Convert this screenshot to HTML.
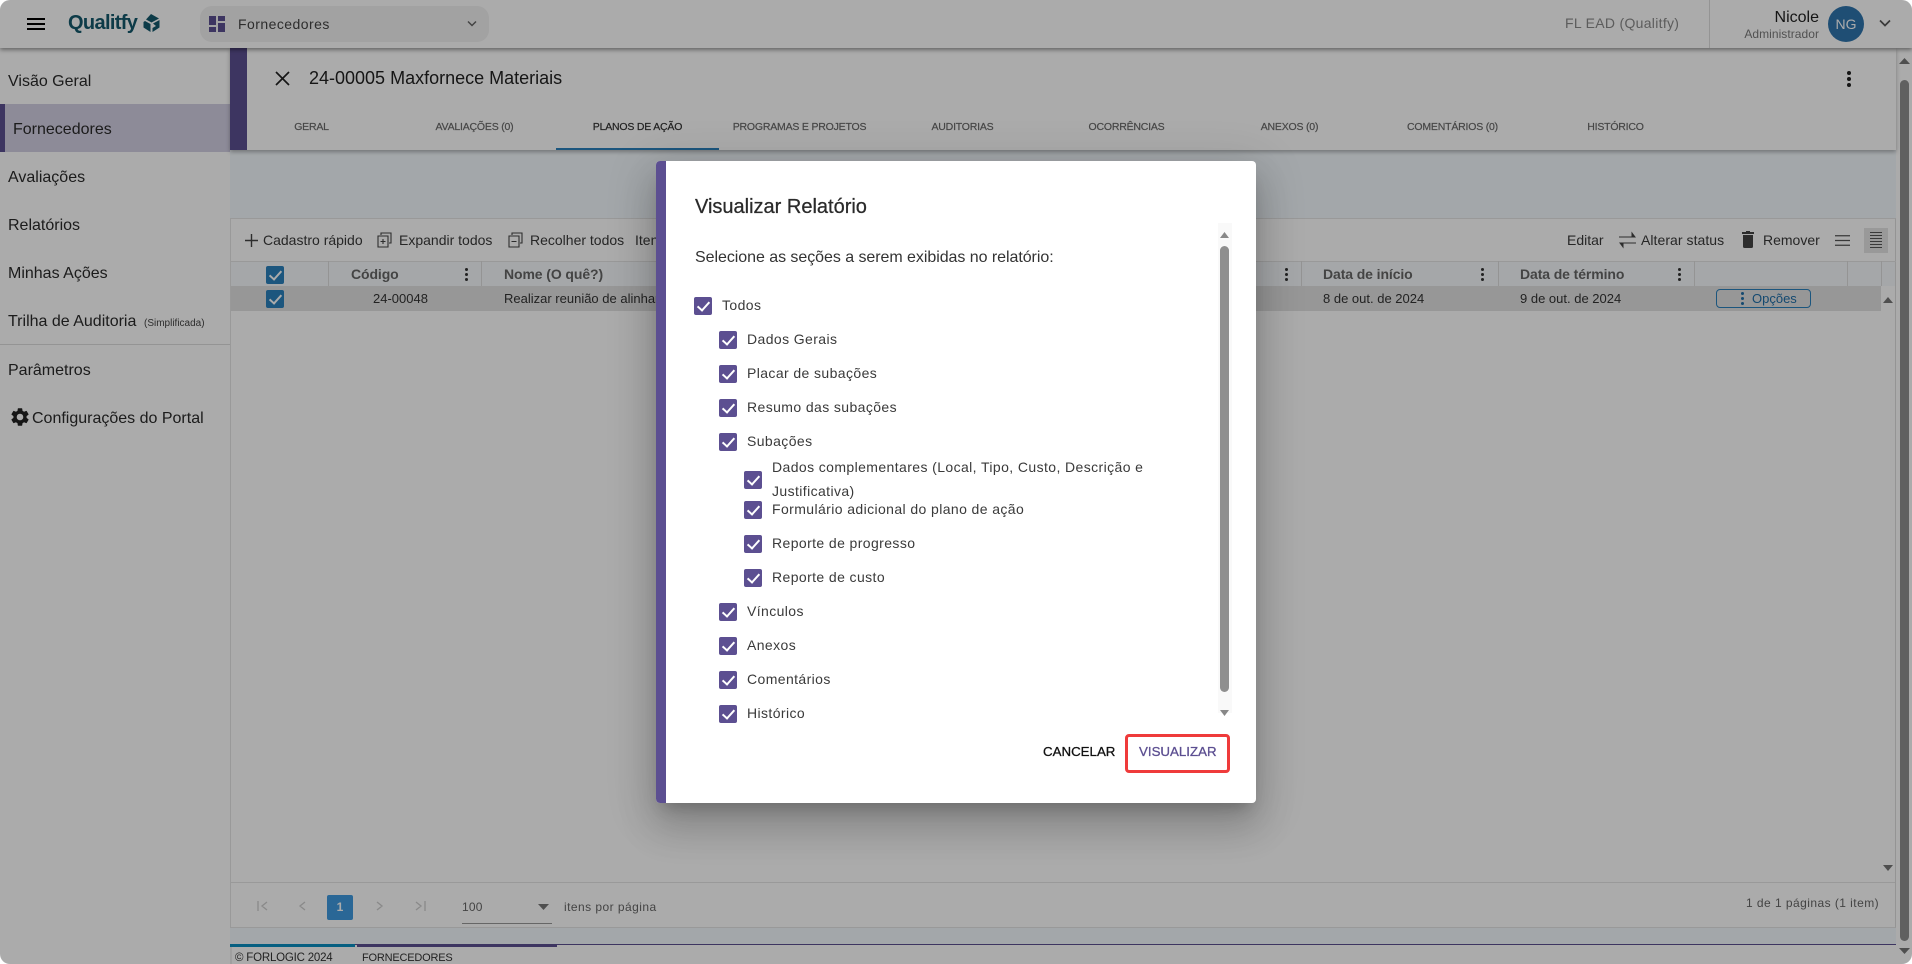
<!DOCTYPE html>
<html lang="pt-BR"><head><meta charset="utf-8"><title>Visualizar Relatório</title>
<style>
html,body{margin:0;padding:0;width:1912px;height:964px;overflow:hidden;background:#fff}
body{font-family:"Liberation Sans",sans-serif;color:#222;position:relative}
#app{position:absolute;left:0;top:0;width:1912px;height:964px;background:#fff;border-radius:10px;overflow:hidden}
.a{position:absolute}
.t{position:absolute;white-space:nowrap;line-height:20px;height:20px}
.nav{font-size:16px;color:#2a2a2a;margin-top:6px}
.tab{font-size:10.5px;letter-spacing:-.2px;color:#6a6a6a;width:163px;text-align:center;top:117px;-webkit-text-stroke:.2px}
.tb{font-size:14px;color:#3a3a3a;top:230px}
.th{font-size:14px;font-weight:bold;color:#666;top:264px;letter-spacing:-.1px}
.td{font-size:13px;color:#333;top:289px}
.vl{position:absolute;top:261px;height:25px;width:1px;background:#ddd}
.keb{position:absolute;width:3px;height:3px;background:#333;border-radius:50%;box-shadow:0 5px 0 #333,0 -5px 0 #333}
.cb{position:absolute;width:18px;height:18px;border-radius:2px;background:#5c4f91}
.cb::after{content:"";position:absolute;left:6px;top:2px;width:5px;height:10px;border:solid #fff;border-width:0 2px 2px 0;transform:rotate(42deg)}
.cb.b{background:#2a80bd}
.l{position:absolute;white-space:nowrap;font-size:14px;line-height:20px;color:#3a3a3a;letter-spacing:.4px}
#ov{position:absolute;left:0;top:0;width:1912px;height:964px;background:rgba(0,0,0,.33);z-index:10;border-radius:10px}
#dlg{position:absolute;left:656px;top:161px;width:600px;height:642px;background:#fff;border-radius:4px;overflow:hidden;z-index:12}
#sh{position:absolute;left:656px;top:161px;width:600px;height:642px;border-radius:4px;z-index:11;box-shadow:0 11px 15px -7px rgba(0,0,0,.2),0 24px 38px 3px rgba(0,0,0,.14),0 9px 46px 8px rgba(0,0,0,.12)}
</style></head><body>
<div id="app">
<!-- top bar -->
<div class="a" style="left:0;top:0;width:1912px;height:48px;background:#fff;box-shadow:0 2px 4px rgba(0,0,0,.4);z-index:3"></div>
<div style="position:absolute;left:0;top:0;z-index:4">
  <div class="a" style="left:27px;top:18px;width:18px;height:2px;background:#000"></div>
  <div class="a" style="left:27px;top:23px;width:18px;height:2px;background:#000"></div>
  <div class="a" style="left:27px;top:28px;width:18px;height:2px;background:#000"></div>
  <div class="t" style="left:68px;top:13px;font-size:20px;font-weight:bold;color:#14586c;letter-spacing:-.65px">Qualitfy</div>
  <svg class="a" style="left:143px;top:14px" width="17" height="18" viewBox="0 0 17 18"><path d="M8 0 L16 4.5 L8.5 8.5 L3 5.5 Z M2 7 L7.5 10 L7.5 18 L0.5 13.5 L0.5 8 Z M16.5 6 L16.5 13.5 L9.5 18 L9.5 14 L13 12 L10 9.5 Z" fill="#14586c"/></svg>
  <div class="a" style="left:200px;top:6px;width:289px;height:36px;border-radius:12px;background:#f2f2f2"></div>
  <svg class="a" style="left:209px;top:16px" width="16" height="16" viewBox="0 0 16 16"><path d="M0 0h7v9H0zM9 0h7v5H9zM9 7h7v9H9zM0 11h7v5H0z" fill="#5c4f91"/></svg>
  <div class="t" style="left:238px;top:14px;font-size:14px;color:#444;letter-spacing:.45px">Fornecedores</div>
  <svg class="a" style="left:467px;top:20px" width="10" height="8" viewBox="0 0 10 8"><path d="M1 1.5 L5 5.5 L9 1.5" fill="none" stroke="#666" stroke-width="1.5"/></svg>
  <div class="t" style="left:1565px;top:13px;font-size:14px;color:#8a8a8a;letter-spacing:.3px">FL EAD (Qualitfy)</div>
  <div class="a" style="left:1709px;top:0;width:1px;height:48px;background:#ddd"></div>
  <div class="t" style="top:8px;font-size:16px;color:#222;width:46px;left:1773px;text-align:right">Nicole</div>
  <div class="t" style="left:1743px;width:76px;text-align:right;top:24px;font-size:12px;color:#7a7a7a;letter-spacing:.05px">Administrador</div>
  <div class="a" style="left:1828px;top:6px;width:36px;height:36px;border-radius:50%;background:#2f75ad;color:#fff;font-size:14px;line-height:36px;text-align:center">NG</div>
  <svg class="a" style="left:1879px;top:19px" width="12" height="9" viewBox="0 0 12 9"><path d="M1 1.5 L6 6.5 L11 1.5" fill="none" stroke="#555" stroke-width="1.7"/></svg>
</div>

<!-- sidebar -->
<div class="a" style="left:230px;top:48px;width:2px;height:916px;background:#eee"></div>
<div class="a" style="left:0;top:104px;width:230px;height:48px;background:#d2cfe3"></div>
<div class="a" style="left:0;top:104px;width:5px;height:48px;background:#5c4f91"></div>
<div class="t nav" style="left:8px;top:66px">Visão Geral</div>
<div class="t nav" style="left:13px;top:114px">Fornecedores</div>
<div class="t nav" style="left:8px;top:162px">Avaliações</div>
<div class="t nav" style="left:8px;top:210px">Relatórios</div>
<div class="t nav" style="left:8px;top:258px">Minhas Ações</div>
<div class="t nav" style="left:8px;top:306px">Trilha de Auditoria</div>
<div class="t" style="left:144px;top:314px;font-size:10px;color:#444">(Simplificada)</div>
<div class="a" style="left:0;top:344px;width:230px;height:1px;background:#ddd"></div>
<div class="t nav" style="left:8px;top:355px">Parâmetros</div>
<svg class="a" style="left:9px;top:406px" width="22" height="22" viewBox="0 0 24 24"><path fill="#222" d="M19.14 12.94c.04-.3.06-.61.06-.94s-.02-.64-.07-.94l2.03-1.58a.5.5 0 0 0 .12-.61l-1.92-3.32a.5.5 0 0 0-.59-.22l-2.39.96a7 7 0 0 0-1.62-.94l-.36-2.54a.5.5 0 0 0-.48-.41h-3.84a.5.5 0 0 0-.47.41l-.36 2.54c-.59.24-1.13.57-1.62.94l-2.39-.96a.5.5 0 0 0-.59.22L2.74 8.87a.5.5 0 0 0 .12.61l2.03 1.58c-.05.3-.09.63-.09.94s.02.64.07.94l-2.03 1.58a.5.5 0 0 0-.12.61l1.92 3.32c.12.22.37.29.59.22l2.39-.96c.5.38 1.03.7 1.62.94l.36 2.54c.05.24.24.41.48.41h3.84c.24 0 .44-.17.47-.41l.36-2.54c.59-.24 1.13-.56 1.62-.94l2.39.96c.22.08.47 0 .59-.22l1.92-3.32a.5.5 0 0 0-.12-.61l-2.01-1.58zM12 15.6A3.6 3.6 0 1 1 12 8.4a3.6 3.6 0 0 1 0 7.2z"/></svg>
<div class="t nav" style="left:32px;top:403px">Configurações do Portal</div>

<!-- detail header -->
<div class="a" style="left:230px;top:150px;width:1666px;height:68px;background:#f4fafe"></div>
<div class="a" style="left:230px;top:48px;width:1666px;height:102px;background:#fff;box-shadow:0 2px 4px rgba(0,0,0,.3);z-index:1"></div>
<div style="position:absolute;left:0;top:0;z-index:2">
  <div class="a" style="left:230px;top:48px;width:17px;height:102px;background:#5c4f91"></div>
  <svg class="a" style="left:275px;top:71px" width="15" height="15" viewBox="0 0 15 15"><path d="M1 1 L14 14 M14 1 L1 14" stroke="#222" stroke-width="1.7"/></svg>
  <div class="t" style="left:309px;top:68px;font-size:18px;color:#222">24-00005 Maxfornece Materiais</div>
  <div class="keb" style="left:1847px;top:76.5px;box-shadow:0 6px 0 #222,0 -6px 0 #222;background:#222;width:4px;height:4px"></div>
  <div class="t tab" style="left:230px">GERAL</div>
  <div class="t tab" style="left:393px">AVALIAÇÕES (0)</div>
  <div class="t tab" style="left:556px;color:#333">PLANOS DE AÇÃO</div>
  <div class="t tab" style="left:718px">PROGRAMAS E PROJETOS</div>
  <div class="t tab" style="left:881px">AUDITORIAS</div>
  <div class="t tab" style="left:1045px">OCORRÊNCIAS</div>
  <div class="t tab" style="left:1208px">ANEXOS (0)</div>
  <div class="t tab" style="left:1371px">COMENTÁRIOS (0)</div>
  <div class="t tab" style="left:1534px">HISTÓRICO</div>
  <div class="a" style="left:556px;top:148px;width:163px;height:2px;background:#2a80bd"></div>
</div>

<!-- grid -->
<div class="a" style="left:230px;top:218px;width:1666px;height:710px;background:#fff;border:1px solid #e4e4e4;border-right:1px solid #ddd;box-sizing:border-box"></div>
<div class="a" style="left:230px;top:928px;width:1666px;height:16px;background:#f4fafe"></div>
<div class="a" style="left:231px;top:261px;width:1665px;height:1px;background:#e4e4e4"></div>
<div class="a" style="left:231px;top:262px;width:1664px;height:24px;background:#f6fafd"></div>
<svg class="a" style="left:245px;top:234px" width="13" height="13" viewBox="0 0 13 13"><path d="M6.5 0v13M0 6.5h13" stroke="#444" stroke-width="1.4"/></svg>
<div class="t tb" style="left:263px">Cadastro rápido</div>
<svg class="a" style="left:377px;top:232px" width="15" height="16" viewBox="0 0 15 16"><path d="M4 3V1h10v10h-2M1 4h10v11H1zM6 7v5M3.5 9.5h5" fill="none" stroke="#444" stroke-width="1.1"/></svg>
<div class="t tb" style="left:399px">Expandir todos</div>
<svg class="a" style="left:508px;top:232px" width="15" height="16" viewBox="0 0 15 16"><path d="M4 3V1h10v10h-2M1 4h10v11H1zM3.5 9.5h5" fill="none" stroke="#444" stroke-width="1.1"/></svg>
<div class="t tb" style="left:530px">Recolher todos</div>
<div class="t tb" style="left:635px">Itens</div>
<div class="t tb" style="left:1567px">Editar</div>
<svg class="a" style="left:1619px;top:231px" width="17" height="18" viewBox="0 0 17 18"><path d="M0 6h14M16 6l-3-4v4zM17 12H3M1 12l3 4v-4z" fill="#444" stroke="#444" stroke-width="1"/></svg>
<div class="t tb" style="left:1641px;letter-spacing:.05px">Alterar status</div>
<svg class="a" style="left:1742px;top:231px" width="12" height="17" viewBox="0 0 12 17"><path d="M4 0h4v1h4v2H0V1h4zM1 4h10v11.500a1.500 1.500 0 0 1-1.500 1.500h-7A1.500 1.500 0 0 1 1 15.500z" fill="#444"/></svg>
<div class="t tb" style="left:1763px">Remover</div>
<svg class="a" style="left:1835px;top:235px" width="15" height="11" viewBox="0 0 15 11"><path d="M0 .75h15M0 5.500h15M0 10.250h15" stroke="#555" stroke-width="1.300"/></svg>
<div class="a" style="left:1864px;top:228px;width:24px;height:25px;background:#e4e4e4"></div>
<svg class="a" style="left:1870px;top:232px" width="12" height="17" viewBox="0 0 12 17"><path d="M0 .5h12M0 3.500h12M0 6.500h12M0 9.500h12M0 12.500h12M0 15.500h12" stroke="#555" stroke-width="1"/></svg>

<div class="cb b" style="left:266px;top:266px"></div>
<div class="vl" style="left:328px"></div><div class="vl" style="left:481px"></div>
<div class="vl" style="left:1301px"></div><div class="vl" style="left:1498px"></div><div class="vl" style="left:1694px"></div><div class="vl" style="left:1847px"></div><div class="vl" style="left:1881px"></div>
<div class="t th" style="left:351px">Código</div>
<div class="keb" style="left:465px;top:273px"></div>
<div class="t th" style="left:504px">Nome (O quê?)</div>
<div class="keb" style="left:1285px;top:273px"></div>
<div class="t th" style="left:1323px">Data de início</div>
<div class="keb" style="left:1481px;top:273px"></div>
<div class="t th" style="left:1520px">Data de término</div>
<div class="keb" style="left:1678px;top:273px"></div>
<div class="a" style="left:231px;top:286px;width:1650px;height:25px;background:#e2e2e2"></div>
<div class="cb b" style="left:266px;top:290px"></div>
<div class="t td" style="left:373px">24-00048</div>
<div class="t td" style="left:504px">Realizar reunião de alinhamento</div>
<div class="t td" style="left:1323px">8 de out. de 2024</div>
<div class="t td" style="left:1520px">9 de out. de 2024</div>
<div class="a" style="left:1716px;top:289px;width:95px;height:19px;box-sizing:border-box;border:1px solid #2a80bd;border-radius:4px"></div>
<div class="keb" style="left:1741px;top:297px;background:#1f6ea8;box-shadow:0 5px 0 #1f6ea8,0 -5px 0 #1f6ea8"></div>
<div class="t" style="left:1752px;top:289px;font-size:13px;color:#1f6ea8">Opções</div>
<svg class="a" style="left:1883px;top:297px" width="10" height="6"><path d="M5 0L10 6H0z" fill="#777"/></svg>
<svg class="a" style="left:1883px;top:865px" width="10" height="6"><path d="M5 6L10 0H0z" fill="#777"/></svg>
<div class="a" style="left:231px;top:882px;width:1664px;height:1px;background:#e4e4e4"></div>

<!-- pagination -->
<svg class="a" style="left:257px;top:901px" width="170" height="10" viewBox="0 0 170 10" fill="none" stroke="#ccc" stroke-width="1.300"><path d="M1 0v10M10 1L5 5l5 4M48 1l-5 4 5 4M120 1l5 4-5 4M159 1l5 4-5 4M168 0v10"/></svg>
<div class="a" style="left:327px;top:895px;width:26px;height:25px;border-radius:2px;background:#3f9ae0;color:#fff;font-size:12px;font-weight:bold;line-height:25px;text-align:center">1</div>
<div class="t" style="left:462px;top:897px;font-size:12px;color:#666;letter-spacing:.2px">100</div>
<svg class="a" style="left:538px;top:904px" width="11" height="6"><path d="M0 0h11L5.500 6z" fill="#777"/></svg>
<div class="a" style="left:462px;top:923px;width:90px;height:1px;background:#999"></div>
<div class="t" style="left:564px;top:897px;font-size:12px;color:#666;letter-spacing:.45px">itens por página</div>
<div class="t" style="left:1746px;top:893px;font-size:12px;color:#666;letter-spacing:.45px">1 de 1 páginas (1 item)</div>

<!-- footer -->
<div class="a" style="left:230px;top:944px;width:1666px;height:1px;background:#5c4f91"></div>
<div class="a" style="left:230px;top:944px;width:125px;height:3px;background:#0a8ec0"></div>
<div class="a" style="left:357px;top:944px;width:200px;height:3px;background:#5c4f91"></div>
<div class="t" style="left:235px;top:948px;font-size:11.5px;color:#333;letter-spacing:-.2px">© FORLOGIC 2024</div>
<div class="t" style="left:362px;top:948px;font-size:11px;color:#333;letter-spacing:-.2px">FORNECEDORES</div>

<!-- main scrollbar -->
<svg class="a" style="left:1899px;top:58px" width="11" height="6"><path d="M5.500 0L11 6H0z" fill="#777"/></svg>
<div class="a" style="left:1900px;top:80px;width:9px;height:861px;border-radius:5px;background:#909090"></div>
<svg class="a" style="left:1899px;top:948px" width="11" height="6"><path d="M5.500 6L11 0H0z" fill="#777"/></svg>
</div>

<div id="ov"></div>
<div id="sh"></div>
<div id="dlg">
  <div class="a" style="left:0;top:0;width:10px;height:642px;background:#5c4f91"></div>
  <div class="t" style="left:39px;top:36px;font-size:20px;color:#2a2a2a;-webkit-text-stroke:.25px">Visualizar Relatório</div>
  <div class="t" style="left:39px;top:87px;font-size:16px;color:#333;letter-spacing:-.05px">Selecione as seções a serem exibidas no relatório:</div>

  <div class="a" style="left:562px;top:62px;width:14px;height:490px;background:#f9f9f9"></div>
  <svg class="a" style="left:564px;top:71px" width="9" height="6"><path d="M4.500 0L9 6H0z" fill="#888"/></svg>
  <div class="a" style="left:564px;top:85px;width:9px;height:446px;border-radius:5px;background:#8f8f8f"></div>
  <svg class="a" style="left:564px;top:549px" width="9" height="6"><path d="M4.500 6L9 0H0z" fill="#888"/></svg>

  <div class="cb" style="left:38px;top:136px"></div><div class="l" style="left:66px;top:134px">Todos</div>
  <div class="cb" style="left:63px;top:170px"></div><div class="l" style="left:91px;top:168px">Dados Gerais</div>
  <div class="cb" style="left:63px;top:204px"></div><div class="l" style="left:91px;top:202px">Placar de subações</div>
  <div class="cb" style="left:63px;top:238px"></div><div class="l" style="left:91px;top:236px">Resumo das subações</div>
  <div class="cb" style="left:63px;top:272px"></div><div class="l" style="left:91px;top:270px">Subações</div>
  <div class="cb" style="left:88px;top:310px"></div><div class="l" style="left:116px;top:296px">Dados complementares (Local, Tipo, Custo, Descrição e</div><div class="l" style="left:116px;top:320px">Justificativa)</div>
  <div class="cb" style="left:88px;top:340px"></div><div class="l" style="left:116px;top:338px">Formulário adicional do plano de ação</div>
  <div class="cb" style="left:88px;top:374px"></div><div class="l" style="left:116px;top:372px">Reporte de progresso</div>
  <div class="cb" style="left:88px;top:408px"></div><div class="l" style="left:116px;top:406px">Reporte de custo</div>
  <div class="cb" style="left:63px;top:442px"></div><div class="l" style="left:91px;top:440px">Vínculos</div>
  <div class="cb" style="left:63px;top:476px"></div><div class="l" style="left:91px;top:474px">Anexos</div>
  <div class="cb" style="left:63px;top:510px"></div><div class="l" style="left:91px;top:508px">Comentários</div>
  <div class="cb" style="left:63px;top:544px"></div><div class="l" style="left:91px;top:542px">Histórico</div>

  <div class="t" style="left:387px;top:581px;font-size:13.300px;color:#111;-webkit-text-stroke:.3px">CANCELAR</div>
  <div class="a" style="left:469px;top:573px;width:105px;height:39px;box-sizing:border-box;border:3px solid #ef3b3b;border-radius:4px"></div>
  <div class="t" style="left:483px;top:581px;font-size:13.300px;color:#5c4f91;-webkit-text-stroke:.3px">VISUALIZAR</div>
</div>
</body></html>
